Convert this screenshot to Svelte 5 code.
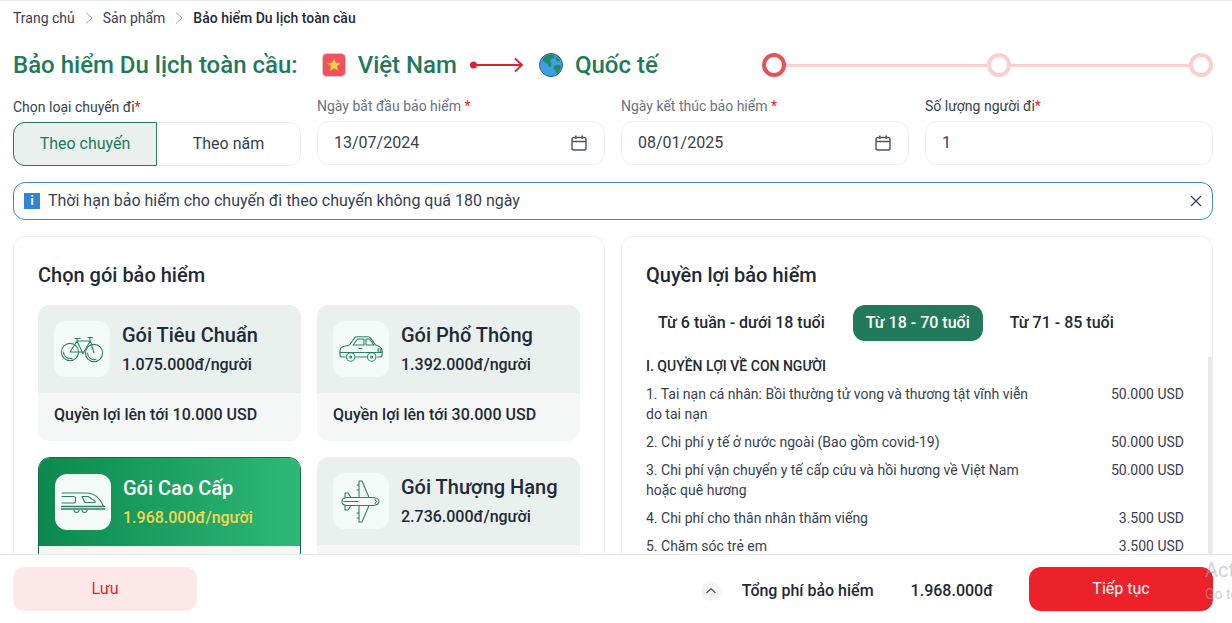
<script>
  const crumbs = ['Trang chủ', 'Sản phẩm'];

  const plans = [
    { id: 'bike', name: 'Gói Tiêu Chuẩn', price: '1.075.000đ/người', limit: 'Quyền lợi lên tới 10.000 USD' },
    { id: 'car', name: 'Gói Phổ Thông', price: '1.392.000đ/người', limit: 'Quyền lợi lên tới 30.000 USD' },
    { id: 'train', name: 'Gói Cao Cấp', price: '1.968.000đ/người', limit: 'Quyền lợi lên tới 50.000 USD', active: true },
    { id: 'plane', name: 'Gói Thượng Hạng', price: '2.736.000đ/người', limit: 'Quyền lợi lên tới 100.000 USD' }
  ];

  const ages = [
    { label: 'Từ 6 tuần - dưới 18 tuổi' },
    { label: 'Từ 18 - 70 tuổi', active: true },
    { label: 'Từ 71 - 85 tuổi' }
  ];

  const benefits = [
    { text: '1. Tai nạn cá nhân: Bồi thường tử vong và thương tật vĩnh viễn do tai nạn', value: '50.000 USD' },
    { text: '2. Chi phí y tế ở nước ngoài (Bao gồm covid-19)', value: '50.000 USD' },
    { text: '3. Chi phí vận chuyển y tế cấp cứu và hồi hương về Việt Nam hoặc quê hương', value: '50.000 USD' },
    { text: '4. Chi phí cho thân nhân thăm viếng', value: '3.500 USD' },
    { text: '5. Chăm sóc trẻ em', value: '3.500 USD' }
  ];
</script>

{#snippet chevron()}
  <svg class="crumb-sep" width="10" height="14" viewBox="0 0 10 14"><path d="M2 1.5 8 7l-6 5.5" fill="none" stroke="#9ca3af" /></svg>
{/snippet}

{#snippet calendar()}
  <svg width="18" height="18" viewBox="0 0 18 18" fill="none" stroke="#4b5563" stroke-width="1.4">
    <rect x="2" y="3.5" width="14" height="12.5" rx="2" />
    <path d="M2 7.5h14M5.8 1.5v3.5M12.2 1.5v3.5" />
  </svg>
{/snippet}

{#snippet planIcon(id)}
  <svg width="56" height="56" viewBox="0 0 56 56" fill="none" stroke="#2f8063" stroke-width="1.1" stroke-linecap="round" stroke-linejoin="round">
    {#if id === 'bike'}
      <circle cx="16" cy="31" r="8.6" />
      <path d="M9.5 31a6.5 6.5 0 0 0 8.5 6.2" />
      <circle cx="40" cy="32" r="8.6" />
      <path d="M33.5 32a6.5 6.5 0 0 0 8.5 6.2" />
      <path d="M16 31 23 20h13.5M23 20l6 12.5L36 20.500M16 31h13M36.500 20 40 32M36 17l-.2 3M34 16.500h4.500M21 17.500h5M23 17.500v2.500" />
    {:else if id === 'car'}
      <path d="M12 36H8.500Q7 36 7 34v-4q0-3.500 3.500-4.500l6-1.500 5-7q1-1.200 2.500-1.200h11q1.600 0 2.600 1.300l5 7 3 1.200q3.500 1.500 3.500 5V34q0 2-2 2h-2.500M23 36h11" />
      <path d="M20 24l4.500-6h6.500v6zM33 18h3.500l4.500 6h-8zM7 31.500h42M26 27.500h3" />
      <circle cx="17.700" cy="36" r="4.200" /><circle cx="38.700" cy="36" r="4.200" />
      <circle cx="17.700" cy="36" r="1" /><circle cx="38.700" cy="36" r="1" />
      <path d="M45 28h3v3h-3z" />
    {:else if id === 'train'}
      <path d="M7 19h24q12 0 17.500 13.500H7" />
      <path d="M7 22.500h11.500q2 0 2 2v2.500q0 2-2 2H7M27 22.500h6l7 4.500q1 1.500-.5 1.500H31q-1.500 0-2-1.500z" />
      <path d="M6.500 32.500h43M6.500 35h43" stroke-width="1.500" />
      <path d="M19 36a2.500 2.500 0 0 0 5 0M27 36a2.500 2.500 0 0 0 5 0" />
    {:else}
      <path d="M13 24.500H40Q46 25 46 28.500 46 32 40 32.500H13Q9 32 9 28.500 9 25 13 24.500z" />
      <path d="M26 24.500V8h3l7 16.500M26 32.500V49h3l7-16.500M12 25v-5h3l3 4.500M12 32v5h3l3-4.500M11 28.500h14M24 12h2M24 17h2M24 40h2M24 45h2M42 26.500l1.500 2-1.500 2" />
    {/if}
  </svg>
{/snippet}

<div class="page">
  <nav class="crumbs">
    {#each crumbs as crumb}
      <span>{crumb}</span>
      {@render chevron()}
    {/each}
    <strong>Bảo hiểm Du lịch toàn cầu</strong>
  </nav>

  <header class="head">
    <h1>Bảo hiểm Du lịch toàn cầu:</h1>
    <svg class="flag" width="24" height="24" viewBox="0 0 24 24">
      <rect x=".5" y=".5" width="23" height="23" rx="4" fill="#f5505f" stroke="#d9cfc5" />
      <path d="m12 5.500 1.900 4.300 4.600.4-3.500 3 1 4.500-4-2.400-4 2.400 1-4.500-3.500-3 4.600-.4z" fill="#f8d34c" stroke="#c9a52f" stroke-width=".6" />
    </svg>
    <span class="place">Việt Nam</span>
    <svg class="route" width="54" height="16" viewBox="0 0 54 16" fill="none" stroke="#d9232e" stroke-width="1.800">
      <circle cx="3.500" cy="8" r="3.500" fill="#d9232e" stroke="none" />
      <path d="M4 8h48M45 1.500 52 8l-7 6.500" />
    </svg>
    <svg class="globe" width="24" height="24" viewBox="0 0 24 24">
      <circle cx="12" cy="12" r="11.500" fill="#3f9ee8" stroke="#2d5f8f" />
      <path d="M7 2.500q5-2 9 0l-1.500 3-2.500.5-1 2.500 1.500 1.500-.5 3.500-2 .5-1-3-3-1.500-2.500-2q1-3 3.500-5zM15 13l4-1.500 3 1.500q-.5 5-4.500 8l-1-3.500-2-1.500zM18 3.500l3 4-2.500 1-2-2.500z" fill="#1f8c63" />
    </svg>
    <span class="place">Quốc tế</span>
    <div class="steps">
      <span class="dot on"></span><span class="line first"></span><span class="dot"></span><span class="line"></span><span class="dot"></span>
    </div>
  </header>

  <section class="fields">
    <div class="field nudge">
      <span class="label dark">Chọn loại chuyến đi<i>*</i></span>
      <div class="toggle">
        <span class="opt sel">Theo chuyến</span>
        <span class="opt">Theo năm</span>
      </div>
    </div>
    <div class="field">
      <span class="label">Ngày bắt đầu bảo hiểm <i>*</i></span>
      <div class="input"><span>13/07/2024</span>{@render calendar()}</div>
    </div>
    <div class="field">
      <span class="label">Ngày kết thúc bảo hiểm <i>*</i></span>
      <div class="input"><span>08/01/2025</span>{@render calendar()}</div>
    </div>
    <div class="field">
      <span class="label dark">Số lượng người đi<i>*</i></span>
      <div class="input"><span>1</span></div>
    </div>
  </section>

  <div class="alert">
    <span class="info">i</span>
    <span class="alert-text">Thời hạn bảo hiểm cho chuyến đi theo chuyến không quá 180 ngày</span>
    <svg width="14" height="14" viewBox="0 0 14 14"><path d="m2 2 10 10M12 2 2 12" stroke="#374151" stroke-width="1.300" /></svg>
  </div>

  <main class="panels">
    <section class="panel">
      <h2>Chọn gói bảo hiểm</h2>
      <div class="plans">
        {#each plans as plan}
          <article class="plan" class:active={plan.active}>
            <div class="plan-top">
              <div class="plan-icon">{@render planIcon(plan.id)}</div>
              <div>
                <div class="plan-name">{plan.name}</div>
                <div class="plan-price">{plan.price}</div>
              </div>
            </div>
            <div class="plan-limit">{plan.limit}</div>
          </article>
        {/each}
      </div>
    </section>

    <section class="panel right">
      <h2>Quyền lợi bảo hiểm</h2>
      <div class="tabs">
        {#each ages as age}
          <span class="tab" class:active={age.active}>{age.label}</span>
        {/each}
      </div>
      <div class="list">
        <div class="list-title">I. QUYỀN LỢI VỀ CON NGƯỜI</div>
        {#each benefits as row}
          <div class="row">
            <span class="row-text">{row.text}</span>
            <span class="row-value">{row.value}</span>
          </div>
        {/each}
      </div>
      <span class="thumb"></span>
    </section>
  </main>

  <footer class="foot">
    <button class="btn save">Lưu</button>
    <div class="total">
      <span class="up">
        <svg width="12" height="12" viewBox="0 0 12 12"><path d="M1.500 8 6 3.500 10.500 8" fill="none" stroke="#4b5563" stroke-width="1.200" /></svg>
      </span>
      <span class="total-label">Tổng phí bảo hiểm</span>
      <span class="total-value">1.968.000đ</span>
    </div>
    <button class="btn next">Tiếp tục</button>
  </footer>

  <div class="watermark">
    <div class="wm-big">Activate Windows</div>
    <div class="wm-small">Go to Settings to activate Windows.</div>
  </div>
</div>

<style>
  :global(body) {
    margin: 0;
    background: #fff;
  }

  .page {
    position: relative;
    width: 1232px;
    height: 623px;
    box-sizing: border-box;
    padding: 0 19px 0 13px;
    overflow: hidden;
    border-top: 1px solid #e5e7eb;
    font-family: Roboto, "Liberation Sans", sans-serif;
    color: #1f2937;
  }

  .crumbs {
    display: flex;
    align-items: center;
    gap: 9px;
    height: 20px;
    padding-top: 7px;
    font-size: 14px;
    line-height: 20px;
    color: #374151;
  }

  .crumbs strong {
    font-weight: 500;
    color: #1f2937;
  }

  .crumb-sep {
    display: block;
  }

  .head {
    display: flex;
    align-items: center;
    height: 32px;
    margin-top: 21px;
    color: #217a5b;
    font-size: 24px;
    font-weight: 500;
  }

  h1 {
    margin: 0;
    font: inherit;
  }

  .flag {
    margin-left: 24px;
  }

  .place {
    margin-left: 12px;
  }

  .route {
    margin-left: 13px;
  }

  .globe {
    margin-left: 15px;
  }

  .steps {
    display: flex;
    align-items: center;
    width: 451px;
    margin-left: auto;
  }

  .dot {
    width: 24px;
    height: 24px;
    box-sizing: border-box;
    border: 4px solid #f9cfcf;
    border-radius: 50%;
    flex: none;
  }

  .dot.on {
    border-color: #e25256;
  }

  .line {
    flex: 1;
    height: 3px;
    background: #f9cfcf;
  }

  .line.first {
    flex: none;
    width: 201px;
  }

  .fields {
    display: grid;
    grid-template-columns: repeat(4, 1fr);
    gap: 16px;
    margin-top: 15px;
  }

  .field {
    display: flex;
    flex-direction: column;
    gap: 5px;
  }

  .nudge {
    padding-top: 1px;
  }

  .label {
    font-size: 14px;
    line-height: 20px;
    color: #6b7280;
  }

  .label.dark {
    color: #374151;
  }

  .label i {
    font-style: normal;
    color: #e5232d;
  }

  .toggle {
    display: flex;
    height: 44px;
    box-sizing: border-box;
    border: 1px solid #eceef0;
    border-radius: 12px;
    font-size: 16px;
  }

  .opt {
    flex: 1;
    display: flex;
    align-items: center;
    justify-content: center;
    padding-bottom: 2px;
    color: #374151;
  }

  .opt.sel {
    flex: none;
    width: 144px;
    box-sizing: border-box;
    margin: -1px 0 -1px -1px;
    background: #e9f0ee;
    border: 1px solid #217a5b;
    border-radius: 12px 0 0 12px;
    color: #217a5b;
  }

  .input {
    display: flex;
    align-items: center;
    justify-content: space-between;
    height: 44px;
    box-sizing: border-box;
    padding: 0 16px;
    border: 1px solid #eceef0;
    border-radius: 12px;
    font-size: 16px;
    color: #374151;
  }

  .input span {
    margin-bottom: 2px;
  }

  .alert {
    display: flex;
    align-items: center;
    height: 38px;
    box-sizing: border-box;
    margin-top: 16px;
    padding: 0 9px 0 10px;
    border: 1px solid #3b89c9;
    border-radius: 12px;
    font-size: 16px;
    color: #374151;
  }

  .info {
    width: 16px;
    height: 16px;
    margin-right: 8px;
    background: #2f86d6;
    color: #fff;
    font-size: 12px;
    font-weight: 700;
    line-height: 16px;
    text-align: center;
  }

  .alert-text {
    flex: 1;
    margin-bottom: 2px;
  }

  .panels {
    display: grid;
    grid-template-columns: 1fr 1fr;
    gap: 16px;
    margin-top: 16px;
  }

  .panel {
    position: relative;
    height: 500px;
    box-sizing: border-box;
    padding: 24px;
    border: 1px solid #eceef0;
    border-radius: 12px;
  }

  h2 {
    margin: 0;
    font-size: 20px;
    font-weight: 500;
    line-height: 28px;
    color: #1f2937;
  }

  .plans {
    display: grid;
    grid-template-columns: 1fr 1fr;
    gap: 16px;
    margin-top: 16px;
  }

  .plan {
    box-sizing: border-box;
    height: 136px;
    border-radius: 12px;
    overflow: hidden;
    background: #f4f7f6;
  }

  .plan-top {
    display: flex;
    align-items: center;
    gap: 12px;
    height: 88px;
    box-sizing: border-box;
    padding: 0 16px;
    background: #e9f0ee;
  }

  .plan-icon {
    width: 56px;
    height: 56px;
    border-radius: 12px;
    background: #f4faf8;
    flex: none;
  }

  .plan-icon svg {
    display: block;
  }

  .plan-name {
    font-size: 20px;
    font-weight: 500;
    line-height: 28px;
    color: #1f2937;
  }

  .plan-price {
    margin-top: 4px;
    font-size: 16px;
    font-weight: 500;
    line-height: 24px;
    color: #1f2937;
  }

  .plan-limit {
    padding: 0 16px;
    font-size: 16px;
    font-weight: 500;
    line-height: 44px;
    color: #1f2937;
  }

  .plan.active {
    border: 1px solid #14694a;
  }

  .plan.active .plan-top {
    background: linear-gradient(90deg, #0c8a4e, #2eb878);
  }

  .plan.active .plan-name {
    color: #fff;
  }

  .plan.active .plan-price {
    color: #f3d94e;
  }

  .tabs {
    display: flex;
    gap: 15px;
    margin-top: 16px;
    font-size: 16px;
    font-weight: 500;
    color: #1f2937;
  }

  .tab {
    height: 36px;
    padding: 0 12px;
    border-radius: 12px;
    line-height: 36px;
  }

  .tab:first-child {
    margin-right: 1px;
  }

  .tab.active {
    padding: 0 13px;
    background: #217a5b;
    color: #fff;
  }

  .list {
    display: flex;
    flex-direction: column;
    gap: 8px;
    margin-top: 15px;
    font-size: 14px;
    line-height: 20px;
    color: #374151;
  }

  .list-title {
    font-weight: 500;
    color: #1f2937;
  }

  .row {
    display: flex;
    justify-content: space-between;
    padding-right: 4px;
  }

  .row-text {
    width: 392px;
  }

  .thumb {
    position: absolute;
    top: 120px;
    right: 0;
    width: 4px;
    height: 300px;
    background: #e9e9e9;
  }

  .foot {
    position: absolute;
    left: 0;
    right: 0;
    bottom: 0;
    display: flex;
    align-items: center;
    gap: 36px;
    height: 69px;
    box-sizing: border-box;
    padding: 0 19px 0 13px;
    border-top: 1px solid #e5e7eb;
    background: #fff;
    font-family: inherit;
  }

  .btn {
    width: 184px;
    height: 44px;
    padding: 0 0 2px;
    border: 0;
    border-radius: 12px;
    font: 400 16px Roboto, "Liberation Sans", sans-serif;
  }

  .save {
    background: #fde8e9;
    color: #ed2129;
    margin-right: auto;
  }

  .next {
    background: #ed2129;
    color: #fff;
  }

  .total {
    display: flex;
    align-items: center;
    padding-top: 3px;
    font-size: 16px;
    font-weight: 500;
    color: #1f2937;
  }

  .up {
    display: flex;
    align-items: center;
    justify-content: center;
    width: 20px;
    height: 20px;
    margin-right: 21px;
    border-radius: 50%;
    background: #f3f4f6;
  }

  .total-value {
    margin-left: 37px;
  }

  .watermark {
    position: absolute;
    left: 1205px;
    top: 556px;
    width: 300px;
    color: rgba(170, 170, 170, 0.55);
    pointer-events: none;
  }

  .wm-big {
    font-size: 20px;
    line-height: 26px;
  }

  .wm-small {
    margin-top: 2px;
    font-size: 14px;
    line-height: 18px;
  }
</style>
